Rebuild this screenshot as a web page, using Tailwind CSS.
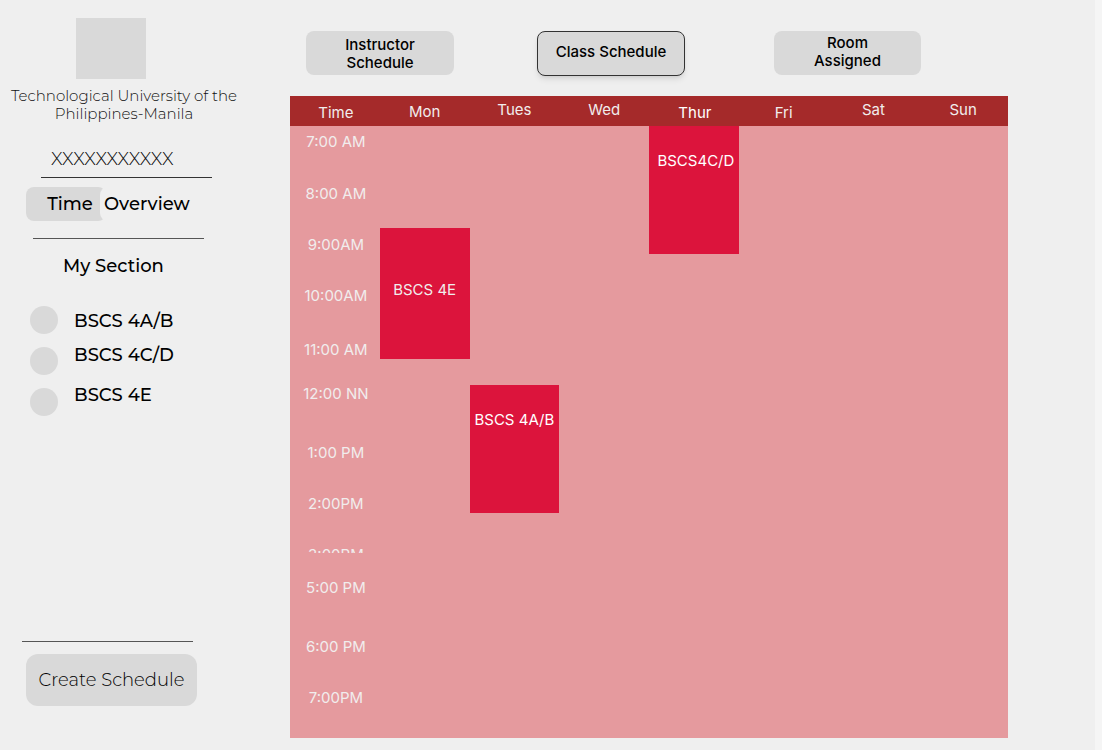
<!DOCTYPE html>
<html lang="en">
<head>
<meta charset="utf-8">
<meta name="viewport" content="width=device-width, initial-scale=1">
<title>Class Schedule</title>
<script src="https://cdn.jsdelivr.net/npm/@tailwindcss/browser@4"></script>
</head>
<body class="flex min-h-screen border-r-[7px] border-[#f5f5f5] bg-[#efefef] font-['Inter',sans-serif] text-black">

<aside class="flex w-[290px] shrink-0 flex-col font-['Montserrat','Inter',sans-serif]">
  <div class="mt-[18px] ml-[76px] h-[61px] w-[70px] bg-[#d9d9d9]"></div>
  <p class="mt-2 w-[248px] text-center text-[15px]/[18px] font-light text-[#111]">Technological University of the<br>Philippines-Manila</p>
  <p class="mt-[26px] ml-[51px] text-lg/[20px] font-light">XXXXXXXXXXX</p>
  <hr class="mt-2 ml-[41px] w-[171px] border-[#333]">

  <nav class="mt-[9px] ml-[26px] flex h-[34px] text-lg/[34px] font-medium" aria-label="View">
    <button type="button" class="w-20 rounded-lg bg-[#d9d9d9] pl-2">Time</button>
    <button type="button" class="-ml-1.5 rounded-lg bg-[#efefef] px-1">Overview</button>
  </nav>
  <hr class="mt-[17px] ml-[33px] w-[171px] border-[#555]">

  <h2 class="mt-[15px] ml-[63px] text-lg/[24px] font-medium">My Section</h2>
  <div class="mt-7 ml-[30px] flex gap-4 text-lg/[28px] font-medium">
    <div class="flex flex-col gap-[13px]" aria-hidden="true">
      <span class="size-7 rounded-full bg-[#d9d9d9]"></span>
      <span class="size-7 rounded-full bg-[#d9d9d9]"></span>
      <span class="size-7 rounded-full bg-[#d9d9d9]"></span>
    </div>
    <ul class="pt-px">
      <li>BSCS 4A/B</li>
      <li class="mt-1.5">BSCS 4C/D</li>
      <li class="mt-3">BSCS 4E</li>
    </ul>
  </div>

  <hr class="mt-auto ml-[22px] w-[171px] border-[#555]">
  <button type="button" class="mt-3 mb-11 ml-[26px] h-[52px] w-[171px] rounded-xl bg-[#d9d9d9] text-lg/[24px] font-light">Create Schedule</button>
</aside>

<main class="mr-[87px] flex min-w-0 flex-1 flex-col pb-3">
  <nav class="mt-[31px] ml-4 flex text-[15px]/[18px] font-medium" aria-label="Schedules">
    <button type="button" class="h-11 w-[148px] rounded-lg bg-[#d9d9d9] pt-0.5">Instructor<br>Schedule</button>
    <button type="button" class="ml-[83px] h-[45px] w-[148px] rounded-lg border border-[#333] bg-[#d9d9d9] pb-1 shadow-md">Class Schedule</button>
    <button type="button" class="ml-[89px] h-11 w-[147px] rounded-lg bg-[#d9d9d9] pb-0.5">Room<br>Assigned</button>
  </nav>

  <table class="mt-5 w-full table-fixed border-collapse bg-[#e59a9e] text-center text-[15px]/[18px] text-[#f1eded]">
    <thead>
      <tr class="h-[30px] bg-[#a52a2a] *:p-0 *:font-normal">
        <th scope="col"><div class="pt-1 pl-0.5">Time</div></th>
        <th scope="col"><div class="pt-0.5">Mon</div></th>
        <th scope="col"><div class="pb-0.5">Tues</div></th>
        <th scope="col"><div class="pb-0.5">Wed</div></th>
        <th scope="col" class="text-white"><div class="pt-1 pl-0.5">Thur</div></th>
        <th scope="col"><div class="pt-1">Fri</div></th>
        <th scope="col"><div class="pb-0.5">Sat</div></th>
        <th scope="col"><div class="pb-0.5">Sun</div></th>
      </tr>
    </thead>
    <tbody class="[&_th]:p-0 [&_th]:pt-[7px] [&_th]:pl-0.5 [&_th]:align-top [&_th]:font-normal [&_td]:p-0">
      <tr class="h-[52px]"><th scope="row">7:00 AM</th><td></td><td></td><td></td>
        <td class="relative"><div class="absolute inset-x-0 top-0 h-32 bg-[#dc143c] pt-[26px] pl-1 whitespace-nowrap text-white">BSCS4C/D</div></td>
        <td></td><td></td><td></td></tr>
      <tr class="h-[51px]"><th scope="row">8:00 AM</th><td colspan="7"></td></tr>
      <tr class="h-[51px]"><th scope="row">9:00AM</th>
        <td class="relative"><div class="absolute inset-x-0 -top-px h-[131px] bg-[#dc143c] pt-[53px]">BSCS 4E</div></td>
        <td colspan="6"></td></tr>
      <tr class="h-[54px]"><th scope="row">10:00AM</th><td colspan="7"></td></tr>
      <tr class="h-[44px]"><th scope="row">11:00 AM</th><td colspan="7"></td></tr>
      <tr class="h-[59px]"><th scope="row">12:00 NN</th><td></td>
        <td class="relative"><div class="absolute inset-x-0 top-[7px] h-32 bg-[#dc143c] pt-[26px] whitespace-nowrap text-white">BSCS 4A/B</div></td>
        <td colspan="5"></td></tr>
      <tr class="h-[51px]"><th scope="row">1:00 PM</th><td colspan="7"></td></tr>
      <tr class="h-[51px]"><th scope="row">2:00PM</th><td colspan="7"></td></tr>
      <tr class="h-[33px]"><th scope="row"><div class="h-[7px] overflow-hidden">3:00PM</div></th><td colspan="7"></td></tr>
      <tr class="h-[59px]"><th scope="row">5:00 PM</th><td colspan="7"></td></tr>
      <tr class="h-[51px]"><th scope="row">6:00 PM</th><td colspan="7"></td></tr>
      <tr class="h-[56px]"><th scope="row">7:00PM</th><td colspan="7"></td></tr>
    </tbody>
  </table>
</main>

</body>
</html>
